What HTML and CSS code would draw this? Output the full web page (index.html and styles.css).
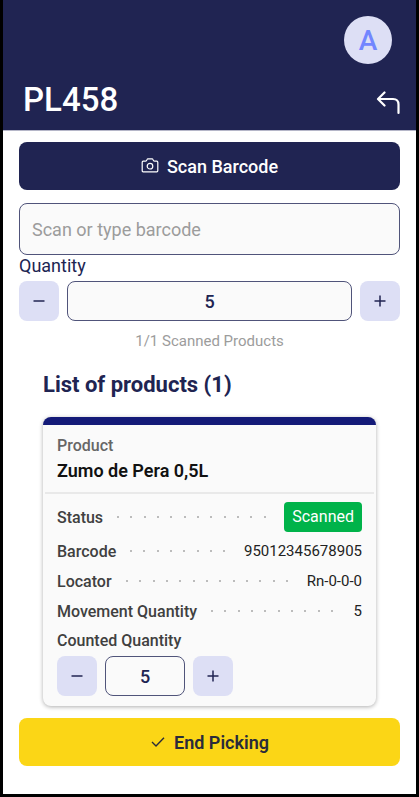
FILE: index.html
```html
<!DOCTYPE html>
<html lang="en">
<head>
<meta charset="utf-8">
<meta name="viewport" content="width=device-width, initial-scale=1">
<title>PL458</title>
<link rel="stylesheet" href="styles.css">
</head>
<body>
<div class="screen">
  <header class="header">
    <button class="avatar" type="button">A</button>
    <div class="title-row">
      <h1 class="title">PL458</h1>
      <button class="back" type="button" aria-label="Back">
        <svg width="24" height="24" viewBox="0 0 24 24" fill="none" stroke="currentColor" stroke-width="2.200" stroke-linecap="round" stroke-linejoin="round"><path d="M8.500 1.500 2 8l6.500 6.500M2.500 8h14.500q5.500 0 5.500 5.500v8.500"/></svg>
      </button>
    </div>
  </header>

  <main class="content">
    <button class="button button-dark" type="button">
      <svg width="18" height="16" viewBox="0 0 18 16" fill="none" stroke="currentColor" stroke-width="1.200" stroke-linejoin="round"><path d="M1.200 4.200q0-1 1-1h2.300q.7 0 1-.6l.6-1.200q.2-.5.8-.5h4.200q.6 0 .8.5l.6 1.200q.3.600 1 .600h2.300q1 0 1 1v8.600q0 1-1 1H2.200q-1 0-1-1z"/><circle cx="9" cy="8.200" r="2.800"/></svg>
      <span>Scan Barcode</span>
    </button>

    <input class="field barcode" type="text" placeholder="Scan or type barcode" aria-label="Barcode">

    <label class="quantity-label" for="quantity">Quantity</label>
    <div class="stepper">
      <button class="step" type="button" aria-label="Decrease quantity"><svg width="12" height="12" viewBox="0 0 12 12" stroke="currentColor" stroke-width="1.500"><path d="M.5 6h11"/></svg></button>
      <input class="field amount" id="quantity" type="text" inputmode="numeric" value="5">
      <button class="step" type="button" aria-label="Increase quantity"><svg width="12" height="12" viewBox="0 0 12 12" stroke="currentColor" stroke-width="1.500"><path d="M.5 6h11M6 .5v11"/></svg></button>
    </div>
    <p class="progress">1/1 Scanned Products</p>

    <section class="products">
      <h2 class="products-title">List of products (1)</h2>
      <article class="card">
        <div class="card-head">
          <p class="card-caption">Product</p>
          <h3 class="card-name">Zumo de Pera 0,5L</h3>
        </div>
        <div class="card-body">
          <dl class="details">
            <div class="row row-status"><dt>Status</dt><dd><span class="badge">Scanned</span></dd></div>
            <div class="row"><dt>Barcode</dt><dd>95012345678905</dd></div>
            <div class="row"><dt>Locator</dt><dd>Rn-0-0-0</dd></div>
            <div class="row"><dt>Movement Quantity</dt><dd>5</dd></div>
          </dl>
          <label class="counted-label" for="counted">Counted Quantity</label>
          <div class="stepper stepper-small">
            <button class="step" type="button" aria-label="Decrease counted quantity"><svg width="12" height="12" viewBox="0 0 12 12" stroke="currentColor" stroke-width="1.500"><path d="M.5 6h11"/></svg></button>
            <input class="field amount" id="counted" type="text" inputmode="numeric" value="5">
            <button class="step" type="button" aria-label="Increase counted quantity"><svg width="12" height="12" viewBox="0 0 12 12" stroke="currentColor" stroke-width="1.500"><path d="M.5 6h11M6 .5v11"/></svg></button>
          </div>
        </div>
      </article>
    </section>

    <button class="button button-yellow" type="button">
      <svg width="16" height="16" viewBox="0 0 16 16" fill="none" stroke="currentColor" stroke-width="1.400"><path d="m2 8 4 4 8-8.300"/></svg>
      <span>End Picking</span>
    </button>
  </main>
</div>
</body>
</html>
```
FILE: styles.css
```css
:root {
  --navy: #202452;
  --lavender: #dddff5;
  --surface: #fafafa;
}

* {
  box-sizing: border-box;
}

body,
h1,
h2,
h3,
p,
dl,
dd {
  margin: 0;
}

body {
  background: #000;
  color: var(--navy);
  font-family: Roboto, "Liberation Sans", sans-serif;
  font-size: 15px;
}

button,
input {
  font: inherit;
  color: inherit;
}

button {
  display: flex;
  align-items: center;
  justify-content: center;
  border: 0;
  padding: 0;
}

.screen {
  display: flex;
  flex-direction: column;
  min-height: 100vh;
  border: solid #000;
  border-width: 0 3px 3px;
  background: #fff;
}

.header {
  display: flex;
  flex-direction: column;
  gap: 16px;
  padding: 16px 16px 10px 20px;
  background: var(--navy);
  border-bottom: 1px solid #b5b6c8;
  color: #fff;
}

.avatar {
  align-self: flex-end;
  width: 48px;
  height: 48px;
  margin-right: 8px;
  border-radius: 50%;
  background: var(--lavender);
  color: #7286ff;
  font-size: 28px;
  font-weight: 500;
}

.title-row {
  display: flex;
  align-items: center;
  justify-content: space-between;
}

.title {
  font-size: 33px;
  font-weight: 500;
  line-height: 40px;
}

.back {
  background: none;
  padding-top: 6px;
}

.content {
  display: flex;
  flex-direction: column;
  padding: 11px 16px 24px;
}

.button {
  gap: 8px;
  height: 48px;
  border-radius: 8px;
  font-size: 18px;
  font-weight: 500;
}

.button-dark {
  background: var(--navy);
  color: #fff;
}

.button-yellow {
  margin-top: 12px;
  background: #fbd616;
  color: #292b3b;
  font-weight: 600;
}

.field {
  min-width: 0;
  border: 1px solid #50547a;
  border-radius: 8px;
  background: var(--surface);
  font-size: 18px;
}

.barcode {
  height: 52px;
  margin-top: 13px;
  padding: 0 12px;
}

.barcode::placeholder {
  color: #9c9c9c;
  opacity: 1;
}

.quantity-label {
  margin-bottom: 4px;
  font-size: 18px;
  line-height: 22px;
}

.stepper {
  display: flex;
  gap: 8px;
}

.step {
  flex: none;
  width: 40px;
  height: 40px;
  border-radius: 8px;
  background: var(--lavender);
}

.amount {
  flex: 1;
  height: 40px;
  font-weight: 500;
  text-align: center;
}

.stepper-small .amount {
  flex: 0 0 80px;
}

.progress {
  margin-top: 10px;
  color: #9c9c9c;
  line-height: 20px;
  text-align: center;
}

.products {
  padding: 20px 24px 0;
}

.products-title {
  font-size: 22px;
  font-weight: 700;
  line-height: 28px;
}

.card {
  margin-top: 18px;
  border-top: 8px solid #141a78;
  border-radius: 8px;
  background: var(--surface);
  box-shadow: 0 1px 4px rgb(0 0 0 / 32%);
}

.card-head {
  margin: 0 2px;
  padding: 9px 12px 8px;
  border-bottom: 2px solid #e9e9e9;
}

.card-caption {
  color: #666;
  font-size: 16px;
  font-weight: 500;
  line-height: 24px;
}

.card-name {
  color: #111;
  font-size: 18px;
  font-weight: 600;
  line-height: 26px;
}

.card-body {
  padding: 8px 14px 10px;
}

.row {
  display: flex;
  align-items: center;
  height: 30px;
  color: #222;
}

.row-status {
  margin-bottom: 4px;
}

.row dt,
.counted-label {
  color: #404040;
  font-size: 16px;
  font-weight: 500;
}

.row::before {
  content: "";
  order: 1;
  flex: 1;
  height: 2px;
  margin: 0 12px 0 8px;
  background:
    linear-gradient(90deg,
      transparent 6px, #bcbcbc 6px 8px,
      transparent 8px 19px, #bcbcbc 19px 21px,
      transparent 21px 33px, #bcbcbc 33px 35px,
      transparent 35px) 0 0 / 40px 2px repeat-x;
}

.row dd {
  order: 2;
}

.badge {
  display: block;
  padding: 0 8px;
  border-radius: 4px;
  background: #00b34a;
  color: #fff;
  font-size: 16px;
  line-height: 30px;
}

.counted-label {
  display: block;
  line-height: 30px;
}
```
